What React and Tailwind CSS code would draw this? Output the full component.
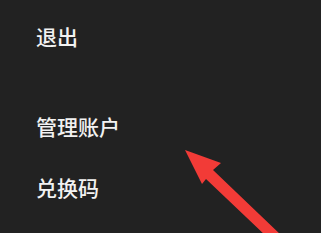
import React from 'react';

const MenuItem = ({ children, className = '' }) => (
  <div className={`h-[30px] flex items-center text-[21px] font-medium leading-none text-[#f2f2f2] ${className}`}>
    {children}
  </div>
);

const App = () => {
  return (
    <div
      className="relative w-[321px] h-[233px] overflow-hidden bg-[#222222] pl-[36px] pt-[21px] flex flex-col"
      style={{ fontFamily: '"Noto Sans CJK SC", "Noto Sans", sans-serif' }}
    >
      <MenuItem>退出</MenuItem>
      <MenuItem className="mt-[60px]">管理账户</MenuItem>
      <MenuItem className="mt-[31px]">兑换码</MenuItem>

      {/* red pointer arrow */}
      <svg className="absolute left-0 top-0" width="321" height="233" viewBox="0 0 321 233">
        <polygon
          points="185,150 221,163 213,170 282,236 266,236 206,179 202,184"
          fill="#f23b37"
        />
      </svg>
    </div>
  );
};

export default App;
